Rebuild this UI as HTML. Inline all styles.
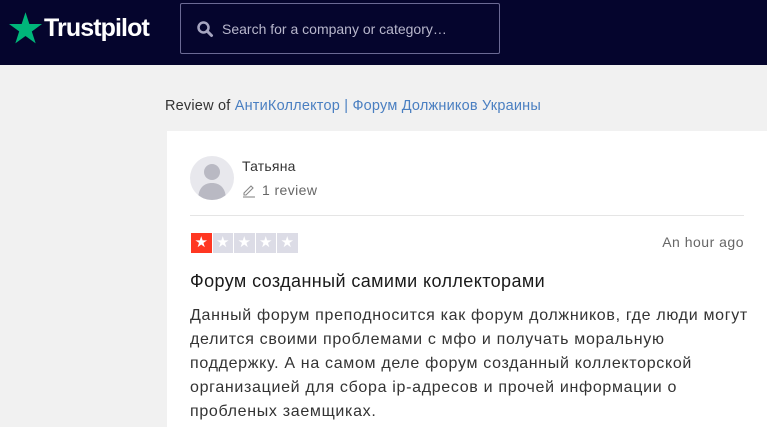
<!DOCTYPE html>
<html><head><meta charset="utf-8"><style>
*{margin:0;padding:0;box-sizing:border-box}
body{width:767px;height:427px;overflow:hidden;background:#f1f1f1;font-family:"Liberation Sans",Arial,sans-serif;position:relative}
.hdr{position:absolute;left:0;top:0;width:767px;height:65px;background:#05052d}
.logo{position:absolute;left:9px;top:12px;color:#fff;font-size:25px;font-weight:bold;letter-spacing:-0.9px;display:flex;align-items:center}
.search{position:absolute;left:180px;top:3px;width:320px;height:51px;border:1px solid #6b6a94;border-radius:2px}
.search span{position:absolute;left:41px;top:17px;color:#b8b7cc;font-size:14px}
.rev{position:absolute;left:165px;top:98px;font-size:14.5px;color:#333;letter-spacing:0.2px}
.rev a{color:#4a7fc1;text-decoration:none}
.card{position:absolute;left:167px;top:131px;width:600px;height:296px;background:#fff}
.av{position:absolute;left:23px;top:25px;width:44px;height:44px;border-radius:50%;background:#e8e8ed;overflow:hidden}
.name{position:absolute;left:75px;top:27px;font-size:14px;color:#333;letter-spacing:0.2px}
.cnt{position:absolute;left:95px;top:51px;font-size:14px;color:#666;letter-spacing:0.4px}
.hr{position:absolute;left:23px;top:84px;width:554px;height:1px;background:#e5e5e5}
.stars{position:absolute;left:24px;top:102px;display:flex;gap:1px}
.stars div{width:20.5px;height:20px;background:#dcdce6;display:flex;align-items:center;justify-content:center;color:#fff;font-size:15px;line-height:20px}
.stars div:first-child{background:#ff3722}
.ago{position:absolute;right:23px;top:103px;font-size:14px;color:#666;letter-spacing:0.5px}
.title{position:absolute;left:23px;top:140px;font-size:18px;color:#1a1a1a;letter-spacing:0.4px}
.body{position:absolute;left:23px;top:173px;width:590px;font-size:16px;line-height:24px;color:#333;letter-spacing:0.68px;white-space:nowrap}
</style></head><body>
<div class="hdr">
<div class="logo"><svg width="33" height="32" viewBox="0 0 24 23" style="margin-right:2px"><path d="M12 0l2.8 8.6H24l-7.4 5.4 2.8 8.7L12 17.3l-7.4 5.4 2.8-8.7L0 8.6h9.2z" fill="#00b67a"/></svg>Trustpilot</div>
<div class="search"><svg width="18" height="18" viewBox="0 0 18 18" style="position:absolute;left:15px;top:16px"><circle cx="7.5" cy="7.5" r="5" stroke="#a6a5c0" stroke-width="2.5" fill="none"/><path d="M11 11l4.5 4.5" stroke="#a6a5c0" stroke-width="3" stroke-linecap="round"/></svg><span>Search for a company or category…</span></div>
</div>
<div class="rev">Review of <a>АнтиКоллектор | Форум Должников Украины</a></div>
<div class="card">
<div class="av"><svg width="44" height="44" viewBox="0 0 44 44"><circle cx="22" cy="16" r="8" fill="#b9b9c3"/><path d="M8 44c0-12 6-17 14-17s14 5 14 17z" fill="#b9b9c3"/></svg></div>
<div class="name">Татьяна</div>
<svg width="16" height="16" viewBox="0 0 16 16" style="position:absolute;left:74px;top:51px"><path d="M3 11l7-7 2 2-7 7H3z" stroke="#888" fill="none" stroke-width="1.1"/><path d="M2 15h12" stroke="#888" stroke-width="1.1"/></svg>
<div class="cnt">1 review</div>
<div class="hr"></div>
<div class="stars"><div>★</div><div>★</div><div>★</div><div>★</div><div>★</div></div>
<div class="ago">An hour ago</div>
<div class="title">Форум созданный самими коллекторами</div>
<div class="body">Данный форум преподносится как форум должников, где люди могут<br>делится своими проблемами с мфо и получать моральную<br>поддержку. А на самом деле форум созданный коллекторской<br>организацией для сбора ip-адресов и прочей информации о<br>пробленых заемщиках.</div>
</div>
</body></html>
